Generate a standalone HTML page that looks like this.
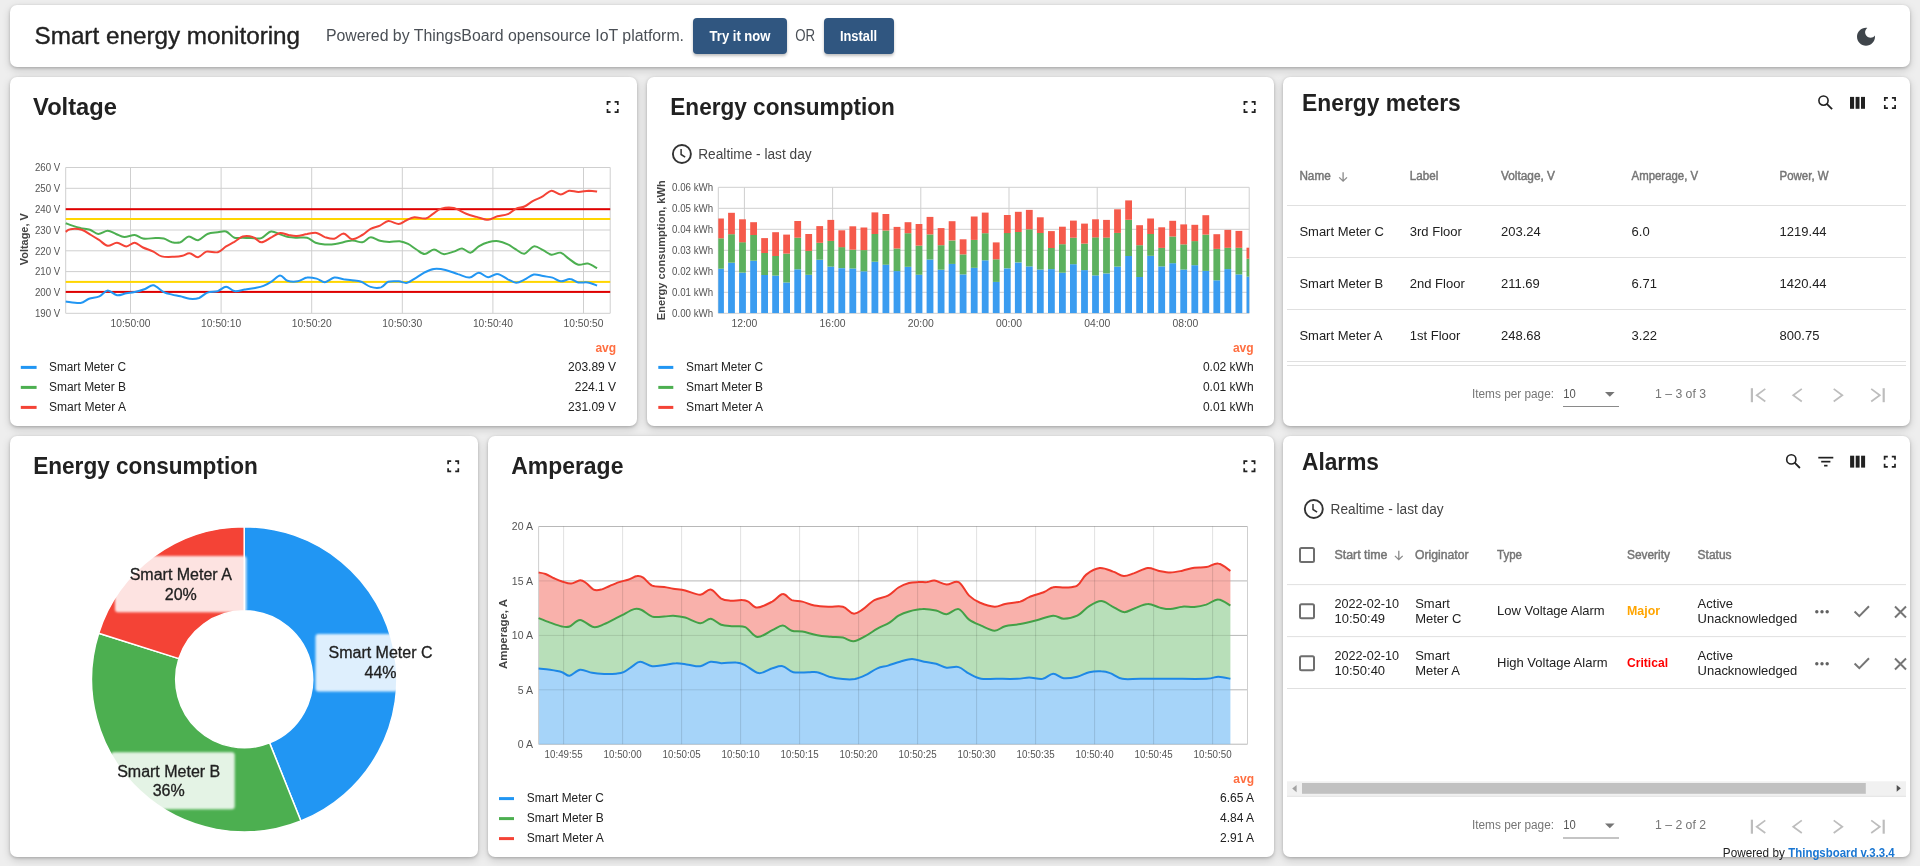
<!DOCTYPE html>
<html><head><meta charset="utf-8"><title>Smart energy monitoring</title>
<style>
html,body{margin:0;padding:0;width:1920px;height:866px;overflow:hidden;background:#eeeeee;font-family:"Liberation Sans",sans-serif}
.card{position:absolute;background:#fff;border-radius:7px;box-shadow:0 3px 8px rgba(0,0,0,.17),0 1px 3px rgba(0,0,0,.2)}
.btn{position:absolute;background:#305680;border-radius:4px;box-shadow:0 2px 3px rgba(0,0,0,.25)}
svg{position:absolute;left:0;top:0;will-change:transform}
</style></head><body>
<div class="card" style="left:10px;top:5px;width:1900px;height:62px"></div>
<div class="card" style="left:10px;top:77px;width:627px;height:349px"></div>
<div class="card" style="left:647px;top:77px;width:627px;height:349px"></div>
<div class="card" style="left:1283px;top:77px;width:627px;height:349px"></div>
<div class="card" style="left:10px;top:436px;width:468px;height:421px"></div>
<div class="card" style="left:488px;top:436px;width:786px;height:421px"></div>
<div class="card" style="left:1283px;top:436px;width:627px;height:421px"></div>
<div class="btn" style="left:693px;top:18px;width:94px;height:36px"></div>
<div class="btn" style="left:824px;top:18px;width:70px;height:36px"></div>
<svg width="1920" height="866" viewBox="0 0 1920 866" font-family="Liberation Sans, sans-serif">
<defs><filter id="soft" x="-10%" y="-10%" width="120%" height="120%"><feGaussianBlur stdDeviation="1.2"/></filter></defs>
<text x="34.5" y="44.1" font-size="23" font-weight="normal" fill="#212121" text-anchor="start" textLength="265.6" lengthAdjust="spacingAndGlyphs" stroke="#212121" stroke-width="0.35">Smart energy monitoring</text>
<text x="325.9" y="40.8" font-size="16" font-weight="normal" fill="#4a4f55" text-anchor="start" textLength="358.1" lengthAdjust="spacingAndGlyphs">Powered by ThingsBoard opensource IoT platform.</text>
<text x="740" y="41.1" font-size="14" font-weight="bold" fill="#fff" text-anchor="middle" textLength="60.8" lengthAdjust="spacingAndGlyphs">Try it now</text>
<text x="795.2" y="41.1" font-size="16" font-weight="normal" fill="#4a4f55" text-anchor="start" textLength="19.9" lengthAdjust="spacingAndGlyphs">OR</text>
<text x="858.5" y="41.1" font-size="14" font-weight="bold" fill="#fff" text-anchor="middle" textLength="37.2" lengthAdjust="spacingAndGlyphs">Install</text>
<path transform="translate(1854,24.8)" fill="#3f454b" d="M12 3c-4.97 0-9 4.03-9 9s4.03 9 9 9 9-4.03 9-9c0-.46-.04-.92-.1-1.36-.98 1.37-2.58 2.26-4.4 2.26-2.98 0-5.4-2.42-5.4-5.4 0-1.81.89-3.42 2.26-4.4-.44-.06-.9-.1-1.36-.1z"/>
<text x="33.1" y="114.9" font-size="24" font-weight="bold" fill="#212121" text-anchor="start" textLength="83.8" lengthAdjust="spacingAndGlyphs">Voltage</text>
<path d="M607.5,105 V101.8 H610.6 M614.6,101.8 H617.8 V105 M617.8,109 V112.2 H614.6 M610.6,112.2 H607.5 V109" fill="none" stroke="#212121" stroke-width="1.7" stroke-linecap="butt" stroke-linejoin="miter"/>
<rect x="65.7" y="167" width="544.5" height="1" fill="#cfcfcf"/>
<text x="60.3" y="171.2" font-size="10.5" font-weight="normal" fill="#545454" text-anchor="end" textLength="25.4" lengthAdjust="spacingAndGlyphs">260 V</text>
<rect x="65.7" y="187.8" width="544.5" height="1" fill="#cfcfcf"/>
<text x="60.3" y="192" font-size="10.5" font-weight="normal" fill="#545454" text-anchor="end" textLength="25.4" lengthAdjust="spacingAndGlyphs">250 V</text>
<rect x="65.7" y="208.7" width="544.5" height="1" fill="#cfcfcf"/>
<text x="60.3" y="212.9" font-size="10.5" font-weight="normal" fill="#545454" text-anchor="end" textLength="25.4" lengthAdjust="spacingAndGlyphs">240 V</text>
<rect x="65.7" y="229.5" width="544.5" height="1" fill="#cfcfcf"/>
<text x="60.3" y="233.7" font-size="10.5" font-weight="normal" fill="#545454" text-anchor="end" textLength="25.4" lengthAdjust="spacingAndGlyphs">230 V</text>
<rect x="65.7" y="250.3" width="544.5" height="1" fill="#cfcfcf"/>
<text x="60.3" y="254.5" font-size="10.5" font-weight="normal" fill="#545454" text-anchor="end" textLength="25.4" lengthAdjust="spacingAndGlyphs">220 V</text>
<rect x="65.7" y="271.1" width="544.5" height="1" fill="#cfcfcf"/>
<text x="60.3" y="275.3" font-size="10.5" font-weight="normal" fill="#545454" text-anchor="end" textLength="25.4" lengthAdjust="spacingAndGlyphs">210 V</text>
<rect x="65.7" y="292" width="544.5" height="1" fill="#cfcfcf"/>
<text x="60.3" y="296.2" font-size="10.5" font-weight="normal" fill="#545454" text-anchor="end" textLength="25.4" lengthAdjust="spacingAndGlyphs">200 V</text>
<rect x="65.7" y="312.8" width="544.5" height="1" fill="#cfcfcf"/>
<text x="60.3" y="317" font-size="10.5" font-weight="normal" fill="#545454" text-anchor="end" textLength="25.4" lengthAdjust="spacingAndGlyphs">190 V</text>
<rect x="130" y="167.5" width="1" height="145.8" fill="#cfcfcf"/>
<text x="130.5" y="327" font-size="10.5" font-weight="normal" fill="#545454" text-anchor="middle" textLength="40" lengthAdjust="spacingAndGlyphs">10:50:00</text>
<rect x="220.6" y="167.5" width="1" height="145.8" fill="#cfcfcf"/>
<text x="221.1" y="327" font-size="10.5" font-weight="normal" fill="#545454" text-anchor="middle" textLength="40" lengthAdjust="spacingAndGlyphs">10:50:10</text>
<rect x="311.2" y="167.5" width="1" height="145.8" fill="#cfcfcf"/>
<text x="311.7" y="327" font-size="10.5" font-weight="normal" fill="#545454" text-anchor="middle" textLength="40" lengthAdjust="spacingAndGlyphs">10:50:20</text>
<rect x="401.8" y="167.5" width="1" height="145.8" fill="#cfcfcf"/>
<text x="402.3" y="327" font-size="10.5" font-weight="normal" fill="#545454" text-anchor="middle" textLength="40" lengthAdjust="spacingAndGlyphs">10:50:30</text>
<rect x="492.4" y="167.5" width="1" height="145.8" fill="#cfcfcf"/>
<text x="492.9" y="327" font-size="10.5" font-weight="normal" fill="#545454" text-anchor="middle" textLength="40" lengthAdjust="spacingAndGlyphs">10:50:40</text>
<rect x="583" y="167.5" width="1" height="145.8" fill="#cfcfcf"/>
<text x="583.5" y="327" font-size="10.5" font-weight="normal" fill="#545454" text-anchor="middle" textLength="40" lengthAdjust="spacingAndGlyphs">10:50:50</text>
<rect x="65.2" y="167.5" width="1" height="145.8" fill="#cfcfcf"/>
<rect x="609.7" y="167.5" width="1" height="145.8" fill="#cfcfcf"/>
<rect x="65.7" y="208.2" width="544.5" height="2" fill="#e00000"/>
<rect x="65.7" y="290.9" width="544.5" height="2" fill="#e00000"/>
<rect x="65.7" y="218" width="544.5" height="2" fill="#ffd600"/>
<rect x="65.7" y="280.9" width="544.5" height="2" fill="#ffd600"/>
<path d="M65.7,223.2 C66.8,223.6 69.8,224.8 72.3,225.6 C74.8,226.5 77.7,227.5 80.6,228.1 C83.6,228.8 87.1,228.8 90,229.8 C92.9,230.8 95.4,233.8 98.3,234 C101.3,234.1 104.7,230.8 107.7,230.8 C110.6,230.8 113.2,232.9 116,234 C118.7,235 121.2,236.9 124.3,237.1 C127.4,237.3 131.6,234.8 134.7,235 C137.8,235.2 139.5,238 143,238.5 C146.5,239.1 152,238.1 155.5,238.1 C158.9,238.1 161,237.8 163.8,238.5 C166.5,239.2 169.3,241.6 172.1,242.3 C174.8,242.9 177.6,243.2 180.4,242.3 C183.2,241.3 185.8,236.8 188.7,236.5 C191.6,236.1 194.9,240.6 198.1,240.2 C201.2,239.8 204.1,235.3 207.4,234 C210.7,232.6 214.7,232.7 217.8,232.3 C220.9,231.9 223.3,230.6 226.1,231.5 C228.9,232.4 231.6,236.7 234.4,237.7 C237.2,238.7 240,237.6 242.7,237.7 C245.5,237.8 247.9,238 251,238.1 C254.2,238.2 258.1,239.2 261.4,238.1 C264.7,237 267.7,232.1 270.8,231.5 C273.9,230.8 277.2,233.4 280.1,234.4 C283.1,235.3 285.7,236.5 288.4,237.1 C291.2,237.6 293.6,237.6 296.8,237.7 C299.9,237.8 304,236.9 307.1,237.7 C310.3,238.5 312.6,241.6 315.6,242.7 C318.5,243.8 321.6,244.1 324.9,244.4 C328.2,244.6 330.8,244.6 335.3,243.9 C339.8,243.3 347.4,240.9 351.9,240.6 C356.5,240.3 359.2,242.8 362.3,242.3 C365.5,241.7 367.7,237.5 370.6,237.3 C373.6,237 376.9,240.1 380,240.8 C383.1,241.6 386.1,241.8 389.4,241.9 C392.6,241.9 396.6,240.9 399.7,241.2 C402.9,241.6 405.3,242.5 408.1,243.9 C410.8,245.3 413.6,247.8 416.4,249.5 C419.1,251.2 421.7,254.1 424.7,254.1 C427.6,254.1 430.9,249.5 434,249.5 C437.1,249.5 440.1,253.8 443.4,254.1 C446.7,254.5 450.6,252.6 453.8,251.6 C456.9,250.7 459.3,248.3 462.1,248.5 C464.8,248.7 467.6,253 470.4,252.7 C473.2,252.3 475.8,248.2 478.7,246.4 C481.6,244.7 484.8,243.1 488.1,242.3 C491.3,241.4 495.2,240.9 498.4,241.2 C501.7,241.6 504.8,243 507.8,244.4 C510.7,245.7 513.3,248 516.1,249.5 C518.9,251.1 521.5,254.2 524.4,253.7 C527.4,253.2 530.6,247 533.8,246.4 C536.9,245.8 540.2,248.8 543.1,250.2 C546.1,251.6 548.5,254.3 551.4,254.7 C554.4,255.2 557.8,252 560.8,252.7 C563.7,253.4 566.1,256.9 569.1,258.9 C572,260.9 575.3,264 578.4,264.7 C581.6,265.5 584.7,262.9 587.8,263.5 C590.9,264.1 595.6,267.5 597.1,268.2" fill="none" stroke="#4caf50" stroke-width="2" stroke-linejoin="round"/>
<path d="M65.7,231.9 C66.5,231.4 67.6,229.5 70.3,229.2 C72.9,228.8 78.2,228.8 81.7,229.8 C85.2,230.8 88.1,233.3 91,235 C94,236.7 96.6,238.4 99.4,240.2 C102.1,242 104.7,245.4 107.7,245.8 C110.6,246.2 113.9,242.6 117,242.7 C120.1,242.8 123.4,246.4 126.4,246.4 C129.3,246.4 131.9,242.5 134.7,242.7 C137.4,242.9 139.9,246 143,247.5 C146.1,249 150.3,250.1 153.4,251.6 C156.5,253.1 158.2,255.5 161.7,256.4 C165.2,257.3 170.7,256.9 174.2,256.8 C177.6,256.7 179.9,256.4 182.5,255.8 C185.1,255.2 187.1,253 189.7,253.3 C192.3,253.5 195.3,257.5 198.1,257.2 C200.8,257 203.1,252.5 206.4,251.6 C209.7,250.8 214.5,253.1 217.8,252.2 C221.1,251.4 223.3,248.2 226.1,246.4 C228.9,244.7 231.6,243.5 234.4,241.9 C237.2,240.2 239.6,237.3 242.7,236.5 C245.8,235.7 250,236.1 253.1,237.1 C256.2,238 258.3,242.3 261.4,242.3 C264.5,242.3 268.7,238.6 271.8,237.1 C274.9,235.5 277.4,233.3 280.1,232.9 C282.9,232.6 285.7,234.5 288.4,235 C291.2,235.5 293.6,236.2 296.8,236 C299.9,235.9 303.8,234.5 307.1,234 C310.5,233.4 313.7,232.4 316.6,232.9 C319.6,233.4 322,236.1 324.9,237.1 C327.9,238 331.2,239.3 334.3,238.7 C337.4,238.2 340.7,233.5 343.6,233.5 C346.6,233.6 348.8,238.9 351.9,239.2 C355.1,239.4 359.2,236.7 362.3,235 C365.5,233.3 367.7,230.3 370.6,228.8 C373.6,227.2 377.1,226.9 380,225.6 C382.9,224.4 385.2,221.4 388.3,221.1 C391.4,220.8 395.8,224.1 398.7,224 C401.6,223.9 403.4,221.6 406,220.5 C408.6,219.3 411,217.7 414.3,217.3 C417.6,217 422.6,219 425.7,218.4 C428.8,217.8 430.4,215.4 433,213.8 C435.6,212.2 437.8,209.6 441.3,208.6 C444.8,207.6 449.6,207.1 453.8,208 C457.9,208.9 462.4,212.3 466.2,213.8 C470,215.3 473,215.9 476.6,216.9 C480.3,217.9 484.6,219.9 488.1,219.8 C491.5,219.7 494.1,217.2 497.4,216.3 C500.7,215.4 504.7,215.5 507.8,214.2 C510.9,212.9 513.3,209.9 516.1,208.6 C518.9,207.3 521.6,207.8 524.4,206.5 C527.2,205.3 529.6,202.9 532.7,201.1 C535.8,199.4 540,197.9 543.1,196.1 C546.2,194.4 548.5,191 551.4,190.7 C554.4,190.5 557.8,194.5 560.8,194.5 C563.7,194.5 566.1,191.2 569.1,190.7 C572,190.3 575.2,192 578.4,192 C581.7,192 585.7,190.8 588.8,190.7 C591.9,190.7 595.8,191.4 597.1,191.6" fill="none" stroke="#f44336" stroke-width="2" stroke-linejoin="round"/>
<path d="M65.7,301.5 C68.2,301.7 76.8,303.4 80.6,302.9 C84.5,302.5 85.8,299.9 89,298.8 C92.1,297.7 96.2,297.7 99.4,296.3 C102.5,294.9 104.7,290.7 107.7,290.5 C110.6,290.3 113.9,294.8 117,295.3 C120.1,295.7 123.4,293.7 126.4,293.2 C129.3,292.7 131.6,292.8 134.7,292.1 C137.8,291.5 141.9,290.2 145.1,289 C148.2,287.9 150.3,284.8 153.4,285.3 C156.5,285.8 160.6,290.6 163.8,292.1 C166.9,293.7 169.3,293.9 172.1,294.6 C174.8,295.3 177.4,295.6 180.4,296.3 C183.3,297 186.6,298.5 189.7,298.8 C192.9,299.1 196.1,299 199.1,298 C202,296.9 204.3,293.7 207.4,292.6 C210.5,291.4 214.7,292.1 217.8,291.1 C220.9,290.1 223.3,286.7 226.1,286.7 C228.9,286.7 231.3,290.6 234.4,291.1 C237.5,291.6 241.3,290.2 244.8,289.6 C248.3,289.1 252.1,288.6 255.2,288 C258.3,287.4 260.7,287 263.5,285.9 C266.3,284.8 269,283.1 271.8,281.3 C274.6,279.6 277.5,275.6 280.1,275.5 C282.7,275.4 284.5,279.7 287.4,280.7 C290.3,281.7 294.5,281.9 297.8,281.3 C301.1,280.8 304,278 307.1,277.6 C310.3,277.1 313.7,277.9 316.6,278.6 C319.6,279.4 322,282.3 324.9,282.2 C327.9,282 331.2,278.1 334.3,277.6 C337.4,277.1 340.7,278.8 343.6,279.3 C346.6,279.7 349,279.9 351.9,280.3 C354.9,280.7 358.2,280.6 361.3,281.8 C364.4,282.9 367.4,286 370.6,286.9 C373.9,287.9 378.1,288.2 381,287.4 C384,286.5 385.4,282.8 388.3,281.8 C391.3,280.7 395.6,281.2 398.7,281.3 C401.8,281.5 404.1,283.4 407,282.8 C410,282.2 413.4,279.3 416.4,277.6 C419.3,275.9 421.7,273.9 424.7,272.4 C427.6,270.9 430.6,269.3 434,268.9 C437.5,268.5 441.5,269 445.5,269.9 C449.4,270.8 453.9,272.8 457.9,274.1 C461.9,275.3 465.9,277.8 469.4,277.6 C472.8,277.4 475.6,272.9 478.7,272.8 C481.8,272.7 484.9,277 488.1,277.2 C491.2,277.4 494.1,273.5 497.4,273.9 C500.7,274.2 504.7,277.8 507.8,279.3 C510.9,280.7 513.3,282.7 516.1,282.8 C518.9,282.9 521.5,281.1 524.4,279.7 C527.4,278.3 530.6,275.1 533.8,274.5 C536.9,273.9 540,275.6 543.1,276.1 C546.2,276.7 549.5,276.7 552.5,277.6 C555.4,278.5 557.8,281.1 560.8,281.3 C563.7,281.6 567.2,278.9 570.1,279.1 C573.1,279.2 575.5,281.8 578.4,282.4 C581.4,282.9 584.7,281.9 587.8,282.4 C590.9,282.9 595.6,285 597.1,285.5" fill="none" stroke="#2196f3" stroke-width="2" stroke-linejoin="round"/>
<text transform="translate(28.4,239.2) rotate(-90)" x="0" y="0" font-size="11.5" font-weight="bold" fill="#444" text-anchor="middle" textLength="52" lengthAdjust="spacingAndGlyphs">Voltage, V</text>
<text x="616.1" y="351.6" font-size="12" font-weight="bold" fill="#ff6e40" text-anchor="end">avg</text>
<rect x="20.8" y="365.9" width="15.8" height="3" fill="#2196f3"/>
<text x="49" y="370.9" font-size="12" font-weight="normal" fill="#212121" text-anchor="start" textLength="77" lengthAdjust="spacingAndGlyphs">Smart Meter C</text>
<text x="616.1" y="370.9" font-size="12" font-weight="normal" fill="#212121" text-anchor="end">203.89 V</text>
<rect x="20.8" y="385.9" width="15.8" height="3" fill="#4caf50"/>
<text x="49" y="390.9" font-size="12" font-weight="normal" fill="#212121" text-anchor="start" textLength="77" lengthAdjust="spacingAndGlyphs">Smart Meter B</text>
<text x="616.1" y="390.9" font-size="12" font-weight="normal" fill="#212121" text-anchor="end">224.1 V</text>
<rect x="20.8" y="405.9" width="15.8" height="3" fill="#f44336"/>
<text x="49" y="410.9" font-size="12" font-weight="normal" fill="#212121" text-anchor="start" textLength="77" lengthAdjust="spacingAndGlyphs">Smart Meter A</text>
<text x="616.1" y="410.9" font-size="12" font-weight="normal" fill="#212121" text-anchor="end">231.09 V</text>
<text x="670.3" y="114.9" font-size="24" font-weight="bold" fill="#212121" text-anchor="start" textLength="224.5" lengthAdjust="spacingAndGlyphs">Energy consumption</text>
<path d="M1244.4,105 V101.8 H1247.6 M1251.6,101.8 H1254.8 V105 M1254.8,109 V112.2 H1251.6 M1247.6,112.2 H1244.4 V109" fill="none" stroke="#212121" stroke-width="1.7" stroke-linecap="butt" stroke-linejoin="miter"/>
<circle cx="681.9" cy="154" r="9.0" fill="none" stroke="#333" stroke-width="1.9"/>
<path d="M681.1,149 V154.5 L685.2,157.2" fill="none" stroke="#333" stroke-width="1.5"/>
<text x="698.2" y="159.4" font-size="14" font-weight="normal" fill="#444" text-anchor="start" textLength="113.5" lengthAdjust="spacingAndGlyphs">Realtime - last day</text>
<rect x="718.3" y="186.8" width="530.9" height="1" fill="#cfcfcf"/>
<text x="713.1" y="191" font-size="10.5" font-weight="normal" fill="#545454" text-anchor="end" textLength="41" lengthAdjust="spacingAndGlyphs">0.06 kWh</text>
<rect x="718.3" y="207.8" width="530.9" height="1" fill="#cfcfcf"/>
<text x="713.1" y="212" font-size="10.5" font-weight="normal" fill="#545454" text-anchor="end" textLength="41" lengthAdjust="spacingAndGlyphs">0.05 kWh</text>
<rect x="718.3" y="228.8" width="530.9" height="1" fill="#cfcfcf"/>
<text x="713.1" y="233" font-size="10.5" font-weight="normal" fill="#545454" text-anchor="end" textLength="41" lengthAdjust="spacingAndGlyphs">0.04 kWh</text>
<rect x="718.3" y="249.8" width="530.9" height="1" fill="#cfcfcf"/>
<text x="713.1" y="254" font-size="10.5" font-weight="normal" fill="#545454" text-anchor="end" textLength="41" lengthAdjust="spacingAndGlyphs">0.03 kWh</text>
<rect x="718.3" y="270.8" width="530.9" height="1" fill="#cfcfcf"/>
<text x="713.1" y="275" font-size="10.5" font-weight="normal" fill="#545454" text-anchor="end" textLength="41" lengthAdjust="spacingAndGlyphs">0.02 kWh</text>
<rect x="718.3" y="291.8" width="530.9" height="1" fill="#cfcfcf"/>
<text x="713.1" y="296" font-size="10.5" font-weight="normal" fill="#545454" text-anchor="end" textLength="41" lengthAdjust="spacingAndGlyphs">0.01 kWh</text>
<rect x="718.3" y="312.8" width="530.9" height="1" fill="#cfcfcf"/>
<text x="713.1" y="317" font-size="10.5" font-weight="normal" fill="#545454" text-anchor="end" textLength="41" lengthAdjust="spacingAndGlyphs">0.00 kWh</text>
<rect x="743.9" y="187.3" width="1" height="126" fill="#cfcfcf"/>
<text x="744.4" y="327" font-size="10.5" font-weight="normal" fill="#545454" text-anchor="middle" textLength="26" lengthAdjust="spacingAndGlyphs">12:00</text>
<rect x="832.1" y="187.3" width="1" height="126" fill="#cfcfcf"/>
<text x="832.6" y="327" font-size="10.5" font-weight="normal" fill="#545454" text-anchor="middle" textLength="26" lengthAdjust="spacingAndGlyphs">16:00</text>
<rect x="920.3" y="187.3" width="1" height="126" fill="#cfcfcf"/>
<text x="920.8" y="327" font-size="10.5" font-weight="normal" fill="#545454" text-anchor="middle" textLength="26" lengthAdjust="spacingAndGlyphs">20:00</text>
<rect x="1008.5" y="187.3" width="1" height="126" fill="#cfcfcf"/>
<text x="1009" y="327" font-size="10.5" font-weight="normal" fill="#545454" text-anchor="middle" textLength="26" lengthAdjust="spacingAndGlyphs">00:00</text>
<rect x="1096.7" y="187.3" width="1" height="126" fill="#cfcfcf"/>
<text x="1097.2" y="327" font-size="10.5" font-weight="normal" fill="#545454" text-anchor="middle" textLength="26" lengthAdjust="spacingAndGlyphs">04:00</text>
<rect x="1184.9" y="187.3" width="1" height="126" fill="#cfcfcf"/>
<text x="1185.4" y="327" font-size="10.5" font-weight="normal" fill="#545454" text-anchor="middle" textLength="26" lengthAdjust="spacingAndGlyphs">08:00</text>
<rect x="717.8" y="187.3" width="1" height="126" fill="#cfcfcf"/>
<rect x="1248.7" y="187.3" width="1" height="126" fill="#cfcfcf"/>
<clipPath id="ec"><rect x="718.3" y="187.3" width="530.9" height="126"/></clipPath>
<g clip-path="url(#ec)">
<rect x="717.1" y="268.7" width="6.8" height="44.6" fill="#3a9cf0"/>
<rect x="717.1" y="238.3" width="6.8" height="30.4" fill="#5db15f"/>
<rect x="717.1" y="218.5" width="6.8" height="19.8" fill="#f55a4b"/>
<rect x="728.1" y="262.7" width="6.8" height="50.6" fill="#3a9cf0"/>
<rect x="728.1" y="234.2" width="6.8" height="28.5" fill="#5db15f"/>
<rect x="728.1" y="212.8" width="6.8" height="21.4" fill="#f55a4b"/>
<rect x="739.1" y="272.7" width="6.8" height="40.6" fill="#3a9cf0"/>
<rect x="739.1" y="242.2" width="6.8" height="30.4" fill="#5db15f"/>
<rect x="739.1" y="219.3" width="6.8" height="23" fill="#f55a4b"/>
<rect x="750.2" y="260.7" width="6.8" height="52.6" fill="#3a9cf0"/>
<rect x="750.2" y="235" width="6.8" height="25.7" fill="#5db15f"/>
<rect x="750.2" y="222.2" width="6.8" height="12.8" fill="#f55a4b"/>
<rect x="761.2" y="275" width="6.8" height="38.3" fill="#3a9cf0"/>
<rect x="761.2" y="253" width="6.8" height="22" fill="#5db15f"/>
<rect x="761.2" y="238.1" width="6.8" height="14.9" fill="#f55a4b"/>
<rect x="772.2" y="275.6" width="6.8" height="37.7" fill="#3a9cf0"/>
<rect x="772.2" y="256" width="6.8" height="19.6" fill="#5db15f"/>
<rect x="772.2" y="232.2" width="6.8" height="23.8" fill="#f55a4b"/>
<rect x="783.2" y="282.5" width="6.8" height="30.8" fill="#3a9cf0"/>
<rect x="783.2" y="253.6" width="6.8" height="28.9" fill="#5db15f"/>
<rect x="783.2" y="234.6" width="6.8" height="19" fill="#f55a4b"/>
<rect x="794.3" y="269.3" width="6.8" height="44" fill="#3a9cf0"/>
<rect x="794.3" y="237.7" width="6.8" height="31.6" fill="#5db15f"/>
<rect x="794.3" y="221" width="6.8" height="16.7" fill="#f55a4b"/>
<rect x="805.3" y="274.8" width="6.8" height="38.5" fill="#3a9cf0"/>
<rect x="805.3" y="250.9" width="6.8" height="23.9" fill="#5db15f"/>
<rect x="805.3" y="234" width="6.8" height="16.9" fill="#f55a4b"/>
<rect x="816.3" y="259.7" width="6.8" height="53.6" fill="#3a9cf0"/>
<rect x="816.3" y="242.8" width="6.8" height="16.9" fill="#5db15f"/>
<rect x="816.3" y="226.1" width="6.8" height="16.7" fill="#f55a4b"/>
<rect x="827.4" y="266.6" width="6.8" height="46.7" fill="#3a9cf0"/>
<rect x="827.4" y="240.9" width="6.8" height="25.7" fill="#5db15f"/>
<rect x="827.4" y="219.9" width="6.8" height="21" fill="#f55a4b"/>
<rect x="838.4" y="268.2" width="6.8" height="45.1" fill="#3a9cf0"/>
<rect x="838.4" y="247.1" width="6.8" height="21" fill="#5db15f"/>
<rect x="838.4" y="230.3" width="6.8" height="16.9" fill="#f55a4b"/>
<rect x="849.4" y="268.5" width="6.8" height="44.8" fill="#3a9cf0"/>
<rect x="849.4" y="249.7" width="6.8" height="18.8" fill="#5db15f"/>
<rect x="849.4" y="226.3" width="6.8" height="23.4" fill="#f55a4b"/>
<rect x="860.5" y="271.3" width="6.8" height="42" fill="#3a9cf0"/>
<rect x="860.5" y="250.1" width="6.8" height="21.2" fill="#5db15f"/>
<rect x="860.5" y="227.5" width="6.8" height="22.6" fill="#f55a4b"/>
<rect x="871.5" y="261.7" width="6.8" height="51.6" fill="#3a9cf0"/>
<rect x="871.5" y="234" width="6.8" height="27.7" fill="#5db15f"/>
<rect x="871.5" y="212.4" width="6.8" height="21.6" fill="#f55a4b"/>
<rect x="882.5" y="264.6" width="6.8" height="48.7" fill="#3a9cf0"/>
<rect x="882.5" y="230.5" width="6.8" height="34.2" fill="#5db15f"/>
<rect x="882.5" y="214" width="6.8" height="16.5" fill="#f55a4b"/>
<rect x="893.6" y="271.1" width="6.8" height="42.2" fill="#3a9cf0"/>
<rect x="893.6" y="248.5" width="6.8" height="22.6" fill="#5db15f"/>
<rect x="893.6" y="226.9" width="6.8" height="21.6" fill="#f55a4b"/>
<rect x="904.6" y="266.8" width="6.8" height="46.5" fill="#3a9cf0"/>
<rect x="904.6" y="233.2" width="6.8" height="33.6" fill="#5db15f"/>
<rect x="904.6" y="222.2" width="6.8" height="11" fill="#f55a4b"/>
<rect x="915.6" y="274.6" width="6.8" height="38.7" fill="#3a9cf0"/>
<rect x="915.6" y="245.6" width="6.8" height="29.1" fill="#5db15f"/>
<rect x="915.6" y="224" width="6.8" height="21.6" fill="#f55a4b"/>
<rect x="926.6" y="259.5" width="6.8" height="53.8" fill="#3a9cf0"/>
<rect x="926.6" y="234.4" width="6.8" height="25.1" fill="#5db15f"/>
<rect x="926.6" y="216.9" width="6.8" height="17.5" fill="#f55a4b"/>
<rect x="937.7" y="269.7" width="6.8" height="43.6" fill="#3a9cf0"/>
<rect x="937.7" y="245.2" width="6.8" height="24.5" fill="#5db15f"/>
<rect x="937.7" y="228.1" width="6.8" height="17.1" fill="#f55a4b"/>
<rect x="948.7" y="263.8" width="6.8" height="49.5" fill="#3a9cf0"/>
<rect x="948.7" y="240.5" width="6.8" height="23.4" fill="#5db15f"/>
<rect x="948.7" y="221.2" width="6.8" height="19.2" fill="#f55a4b"/>
<rect x="959.7" y="274.4" width="6.8" height="38.9" fill="#3a9cf0"/>
<rect x="959.7" y="254.4" width="6.8" height="20" fill="#5db15f"/>
<rect x="959.7" y="239.3" width="6.8" height="15.1" fill="#f55a4b"/>
<rect x="970.8" y="267.8" width="6.8" height="45.5" fill="#3a9cf0"/>
<rect x="970.8" y="239.9" width="6.8" height="27.9" fill="#5db15f"/>
<rect x="970.8" y="216.5" width="6.8" height="23.4" fill="#f55a4b"/>
<rect x="981.8" y="260.3" width="6.8" height="53" fill="#3a9cf0"/>
<rect x="981.8" y="233.2" width="6.8" height="27.1" fill="#5db15f"/>
<rect x="981.8" y="212.6" width="6.8" height="20.6" fill="#f55a4b"/>
<rect x="992.8" y="281.9" width="6.8" height="31.4" fill="#3a9cf0"/>
<rect x="992.8" y="259.3" width="6.8" height="22.6" fill="#5db15f"/>
<rect x="992.8" y="242.4" width="6.8" height="16.9" fill="#f55a4b"/>
<rect x="1003.9" y="268.4" width="6.8" height="44.9" fill="#3a9cf0"/>
<rect x="1003.9" y="233" width="6.8" height="35.3" fill="#5db15f"/>
<rect x="1003.9" y="215" width="6.8" height="18.1" fill="#f55a4b"/>
<rect x="1014.9" y="262.5" width="6.8" height="50.8" fill="#3a9cf0"/>
<rect x="1014.9" y="232" width="6.8" height="30.4" fill="#5db15f"/>
<rect x="1014.9" y="211.8" width="6.8" height="20.2" fill="#f55a4b"/>
<rect x="1025.9" y="266.4" width="6.8" height="46.9" fill="#3a9cf0"/>
<rect x="1025.9" y="229.3" width="6.8" height="37.1" fill="#5db15f"/>
<rect x="1025.9" y="209.9" width="6.8" height="19.4" fill="#f55a4b"/>
<rect x="1036.9" y="269.5" width="6.8" height="43.8" fill="#3a9cf0"/>
<rect x="1036.9" y="233" width="6.8" height="36.5" fill="#5db15f"/>
<rect x="1036.9" y="217.3" width="6.8" height="15.7" fill="#f55a4b"/>
<rect x="1048" y="269.1" width="6.8" height="44.2" fill="#3a9cf0"/>
<rect x="1048" y="247.9" width="6.8" height="21.2" fill="#5db15f"/>
<rect x="1048" y="231.1" width="6.8" height="16.9" fill="#f55a4b"/>
<rect x="1059" y="272.7" width="6.8" height="40.6" fill="#3a9cf0"/>
<rect x="1059" y="244.2" width="6.8" height="28.5" fill="#5db15f"/>
<rect x="1059" y="226.7" width="6.8" height="17.5" fill="#f55a4b"/>
<rect x="1070" y="264.2" width="6.8" height="49.1" fill="#3a9cf0"/>
<rect x="1070" y="237.7" width="6.8" height="26.5" fill="#5db15f"/>
<rect x="1070" y="220.6" width="6.8" height="17.1" fill="#f55a4b"/>
<rect x="1081.1" y="270.1" width="6.8" height="43.2" fill="#3a9cf0"/>
<rect x="1081.1" y="243.6" width="6.8" height="26.5" fill="#5db15f"/>
<rect x="1081.1" y="223.6" width="6.8" height="20" fill="#f55a4b"/>
<rect x="1092.1" y="275.4" width="6.8" height="37.9" fill="#3a9cf0"/>
<rect x="1092.1" y="237.3" width="6.8" height="38.1" fill="#5db15f"/>
<rect x="1092.1" y="219.3" width="6.8" height="18.1" fill="#f55a4b"/>
<rect x="1103.1" y="273.5" width="6.8" height="39.8" fill="#3a9cf0"/>
<rect x="1103.1" y="237.5" width="6.8" height="35.9" fill="#5db15f"/>
<rect x="1103.1" y="219.9" width="6.8" height="17.7" fill="#f55a4b"/>
<rect x="1114.1" y="266.6" width="6.8" height="46.7" fill="#3a9cf0"/>
<rect x="1114.1" y="232.8" width="6.8" height="33.8" fill="#5db15f"/>
<rect x="1114.1" y="209.3" width="6.8" height="23.6" fill="#f55a4b"/>
<rect x="1125.2" y="256" width="6.8" height="57.3" fill="#3a9cf0"/>
<rect x="1125.2" y="219.9" width="6.8" height="36.1" fill="#5db15f"/>
<rect x="1125.2" y="200.4" width="6.8" height="19.4" fill="#f55a4b"/>
<rect x="1136.2" y="277" width="6.8" height="36.3" fill="#3a9cf0"/>
<rect x="1136.2" y="245.2" width="6.8" height="31.8" fill="#5db15f"/>
<rect x="1136.2" y="225.2" width="6.8" height="20" fill="#f55a4b"/>
<rect x="1147.2" y="255.8" width="6.8" height="57.5" fill="#3a9cf0"/>
<rect x="1147.2" y="234" width="6.8" height="21.8" fill="#5db15f"/>
<rect x="1147.2" y="218.5" width="6.8" height="15.5" fill="#f55a4b"/>
<rect x="1158.3" y="266.4" width="6.8" height="46.9" fill="#3a9cf0"/>
<rect x="1158.3" y="247.9" width="6.8" height="18.5" fill="#5db15f"/>
<rect x="1158.3" y="227.3" width="6.8" height="20.6" fill="#f55a4b"/>
<rect x="1169.3" y="263.2" width="6.8" height="50.1" fill="#3a9cf0"/>
<rect x="1169.3" y="236.5" width="6.8" height="26.7" fill="#5db15f"/>
<rect x="1169.3" y="220.8" width="6.8" height="15.7" fill="#f55a4b"/>
<rect x="1180.3" y="269.5" width="6.8" height="43.8" fill="#3a9cf0"/>
<rect x="1180.3" y="244.4" width="6.8" height="25.1" fill="#5db15f"/>
<rect x="1180.3" y="224.4" width="6.8" height="20" fill="#f55a4b"/>
<rect x="1191.4" y="265.2" width="6.8" height="48.1" fill="#3a9cf0"/>
<rect x="1191.4" y="241.1" width="6.8" height="24.1" fill="#5db15f"/>
<rect x="1191.4" y="224.8" width="6.8" height="16.3" fill="#f55a4b"/>
<rect x="1202.4" y="270.9" width="6.8" height="42.4" fill="#3a9cf0"/>
<rect x="1202.4" y="234.6" width="6.8" height="36.3" fill="#5db15f"/>
<rect x="1202.4" y="215.2" width="6.8" height="19.4" fill="#f55a4b"/>
<rect x="1213.4" y="280.3" width="6.8" height="33" fill="#3a9cf0"/>
<rect x="1213.4" y="248.9" width="6.8" height="31.4" fill="#5db15f"/>
<rect x="1213.4" y="234.2" width="6.8" height="14.7" fill="#f55a4b"/>
<rect x="1224.4" y="269.1" width="6.8" height="44.2" fill="#3a9cf0"/>
<rect x="1224.4" y="247.7" width="6.8" height="21.4" fill="#5db15f"/>
<rect x="1224.4" y="229.9" width="6.8" height="17.9" fill="#f55a4b"/>
<rect x="1235.5" y="274.4" width="6.8" height="38.9" fill="#3a9cf0"/>
<rect x="1235.5" y="247.7" width="6.8" height="26.7" fill="#5db15f"/>
<rect x="1235.5" y="230.9" width="6.8" height="16.9" fill="#f55a4b"/>
<rect x="1246.5" y="276.6" width="6.8" height="36.7" fill="#3a9cf0"/>
<rect x="1246.5" y="258.7" width="6.8" height="17.9" fill="#5db15f"/>
<rect x="1246.5" y="247.7" width="6.8" height="11" fill="#f55a4b"/>
</g>
<text transform="translate(665.4,250.2) rotate(-90)" x="0" y="0" font-size="11.5" font-weight="bold" fill="#444" text-anchor="middle" textLength="140" lengthAdjust="spacingAndGlyphs">Energy consumption, kWh</text>
<text x="1253.6" y="351.6" font-size="12" font-weight="bold" fill="#ff6e40" text-anchor="end">avg</text>
<rect x="658.3" y="365.9" width="15" height="3" fill="#2196f3"/>
<text x="686.1" y="370.9" font-size="12" font-weight="normal" fill="#212121" text-anchor="start" textLength="77" lengthAdjust="spacingAndGlyphs">Smart Meter C</text>
<text x="1253.6" y="370.9" font-size="12" font-weight="normal" fill="#212121" text-anchor="end">0.02 kWh</text>
<rect x="658.3" y="385.9" width="15" height="3" fill="#4caf50"/>
<text x="686.1" y="390.9" font-size="12" font-weight="normal" fill="#212121" text-anchor="start" textLength="77" lengthAdjust="spacingAndGlyphs">Smart Meter B</text>
<text x="1253.6" y="390.9" font-size="12" font-weight="normal" fill="#212121" text-anchor="end">0.01 kWh</text>
<rect x="658.3" y="405.9" width="15" height="3" fill="#f44336"/>
<text x="686.1" y="410.9" font-size="12" font-weight="normal" fill="#212121" text-anchor="start" textLength="77" lengthAdjust="spacingAndGlyphs">Smart Meter A</text>
<text x="1253.6" y="410.9" font-size="12" font-weight="normal" fill="#212121" text-anchor="end">0.01 kWh</text>
<text x="1302" y="110.7" font-size="24" font-weight="bold" fill="#212121" text-anchor="start" textLength="158.8" lengthAdjust="spacingAndGlyphs">Energy meters</text>
<circle cx="1823.5" cy="100.6" r="4.6" fill="none" stroke="#212121" stroke-width="1.6"/>
<path d="M1826.8,103.9 L1832.1,109.2" stroke="#212121" stroke-width="1.8"/>
<rect x="1850" y="96.9" width="4.1" height="11.9" fill="#212121"/>
<rect x="1855.6" y="96.9" width="3.9" height="11.9" fill="#212121"/>
<rect x="1861" y="96.9" width="4" height="11.9" fill="#212121"/>
<path d="M1884.8,100.9 V97.8 H1887.9 M1891.9,97.8 H1895.1 V100.9 M1895.1,104.9 V108.1 H1891.9 M1887.9,108.1 H1884.8 V104.9" fill="none" stroke="#212121" stroke-width="1.7" stroke-linecap="butt" stroke-linejoin="miter"/>
<text x="1299.4" y="180.2" font-size="12" font-weight="normal" fill="#757575" text-anchor="start" textLength="31.3" lengthAdjust="spacingAndGlyphs" stroke="#757575" stroke-width="0.45">Name</text>
<text x="1409.8" y="180.2" font-size="12" font-weight="normal" fill="#757575" text-anchor="start" textLength="28.5" lengthAdjust="spacingAndGlyphs" stroke="#757575" stroke-width="0.45">Label</text>
<text x="1501" y="180.2" font-size="12" font-weight="normal" fill="#757575" text-anchor="start" textLength="54" lengthAdjust="spacingAndGlyphs" stroke="#757575" stroke-width="0.45">Voltage, V</text>
<text x="1631.6" y="180.2" font-size="12" font-weight="normal" fill="#757575" text-anchor="start" textLength="66.5" lengthAdjust="spacingAndGlyphs" stroke="#757575" stroke-width="0.45">Amperage, V</text>
<text x="1779.6" y="180.2" font-size="12" font-weight="normal" fill="#757575" text-anchor="start" textLength="49" lengthAdjust="spacingAndGlyphs" stroke="#757575" stroke-width="0.45">Power, W</text>
<path d="M1343.1,172.3 V181 M1339.2,177.4 L1343.1,181.2 L1347,177.4" fill="none" stroke="#8a8a8a" stroke-width="1.3"/>
<rect x="1287" y="205" width="619" height="1" fill="#e0e0e0"/>
<rect x="1287" y="257" width="619" height="1" fill="#e0e0e0"/>
<rect x="1287" y="309" width="619" height="1" fill="#e0e0e0"/>
<rect x="1287" y="361" width="619" height="1" fill="#e0e0e0"/>
<rect x="1287" y="365" width="619" height="1" fill="#e0e0e0"/>
<text x="1299.4" y="235.9" font-size="13" font-weight="normal" fill="#212121" text-anchor="start">Smart Meter C</text>
<text x="1409.8" y="235.9" font-size="13" font-weight="normal" fill="#212121" text-anchor="start">3rd Floor</text>
<text x="1501" y="235.9" font-size="13" font-weight="normal" fill="#212121" text-anchor="start">203.24</text>
<text x="1631.6" y="235.9" font-size="13" font-weight="normal" fill="#212121" text-anchor="start">6.0</text>
<text x="1779.6" y="235.9" font-size="13" font-weight="normal" fill="#212121" text-anchor="start">1219.44</text>
<text x="1299.4" y="287.9" font-size="13" font-weight="normal" fill="#212121" text-anchor="start">Smart Meter B</text>
<text x="1409.8" y="287.9" font-size="13" font-weight="normal" fill="#212121" text-anchor="start">2nd Floor</text>
<text x="1501" y="287.9" font-size="13" font-weight="normal" fill="#212121" text-anchor="start">211.69</text>
<text x="1631.6" y="287.9" font-size="13" font-weight="normal" fill="#212121" text-anchor="start">6.71</text>
<text x="1779.6" y="287.9" font-size="13" font-weight="normal" fill="#212121" text-anchor="start">1420.44</text>
<text x="1299.4" y="339.9" font-size="13" font-weight="normal" fill="#212121" text-anchor="start">Smart Meter A</text>
<text x="1409.8" y="339.9" font-size="13" font-weight="normal" fill="#212121" text-anchor="start">1st Floor</text>
<text x="1501" y="339.9" font-size="13" font-weight="normal" fill="#212121" text-anchor="start">248.68</text>
<text x="1631.6" y="339.9" font-size="13" font-weight="normal" fill="#212121" text-anchor="start">3.22</text>
<text x="1779.6" y="339.9" font-size="13" font-weight="normal" fill="#212121" text-anchor="start">800.75</text>
<text x="1472" y="397.7" font-size="12" font-weight="normal" fill="#757575" text-anchor="start" textLength="82" lengthAdjust="spacingAndGlyphs">Items per page:</text>
<text x="1563.3" y="397.7" font-size="12" font-weight="normal" fill="#555" text-anchor="start" textLength="12.5" lengthAdjust="spacingAndGlyphs">10</text>
<path d="M1605,392 h9.6 l-4.8,4.8z" fill="#757575"/>
<rect x="1563" y="406" width="56" height="1" fill="#8a8a8a"/>
<text x="1655" y="397.7" font-size="12" font-weight="normal" fill="#757575" text-anchor="start" textLength="51" lengthAdjust="spacingAndGlyphs">1 – 3 of 3</text>
<rect x="1750.8" y="388.2" width="2.2" height="14" fill="#bdbdbd"/>
<path d="M1765.3,388.9 L1756.7,395.2 L1765.3,401.5" fill="none" stroke="#bdbdbd" stroke-width="1.75"/>
<path d="M1801.8,388.9 L1793.2,395.2 L1801.8,401.5" fill="none" stroke="#bdbdbd" stroke-width="1.75"/>
<path d="M1833.7,388.9 L1842.3,395.2 L1833.7,401.5" fill="none" stroke="#bdbdbd" stroke-width="1.75"/>
<path d="M1871.2,388.9 L1879.8,395.2 L1871.2,401.5" fill="none" stroke="#bdbdbd" stroke-width="1.75"/>
<rect x="1882.6" y="388.2" width="2.2" height="14" fill="#bdbdbd"/>
<text x="33.2" y="474.3" font-size="24" font-weight="bold" fill="#212121" text-anchor="start" textLength="224.6" lengthAdjust="spacingAndGlyphs">Energy consumption</text>
<path d="M448.1,464.3 V461.2 H451.2 M455.2,461.2 H458.3 V464.3 M458.3,468.3 V471.4 H455.2 M451.2,471.4 H448.1 V468.3" fill="none" stroke="#212121" stroke-width="1.7" stroke-linecap="butt" stroke-linejoin="miter"/>
<path d="M244.2,526.7 A152.6,152.6 0 0 1 300.9,821 L269.6,742.9 A68.5,68.5 0 0 0 244.2,610.8 Z" fill="#2196f3" stroke="#fff" stroke-width="1.5" stroke-linejoin="round"/>
<path d="M300.9,821 A152.6,152.6 0 0 1 98.7,633.2 L178.9,658.6 A68.5,68.5 0 0 0 269.6,742.9 Z" fill="#4caf50" stroke="#fff" stroke-width="1.5" stroke-linejoin="round"/>
<path d="M98.7,633.2 A152.6,152.6 0 0 1 244.2,526.7 L244.2,610.8 A68.5,68.5 0 0 0 178.9,658.6 Z" fill="#f44336" stroke="#fff" stroke-width="1.5" stroke-linejoin="round"/>
<rect x="115" y="556" width="131.5" height="56.3" rx="3" fill="rgba(255,255,255,0.85)" filter="url(#soft)"/>
<text x="180.8" y="580.3" font-size="16" font-weight="normal" fill="#212121" text-anchor="middle" stroke="#212121" stroke-width="0.3">Smart Meter A</text>
<text x="180.8" y="599.5" font-size="16" font-weight="normal" fill="#212121" text-anchor="middle" stroke="#212121" stroke-width="0.3">20%</text>
<rect x="315.5" y="634" width="82.5" height="57.4" rx="3" fill="rgba(255,255,255,0.85)" filter="url(#soft)"/>
<text x="380.5" y="658.3" font-size="16" font-weight="normal" fill="#212121" text-anchor="middle" stroke="#212121" stroke-width="0.3">Smart Meter C</text>
<text x="380.5" y="677.5" font-size="16" font-weight="normal" fill="#212121" text-anchor="middle" stroke="#212121" stroke-width="0.3">44%</text>
<rect x="111" y="752.3" width="123.7" height="56.9" rx="3" fill="rgba(255,255,255,0.85)" filter="url(#soft)"/>
<text x="168.7" y="776.6" font-size="16" font-weight="normal" fill="#212121" text-anchor="middle" stroke="#212121" stroke-width="0.3">Smart Meter B</text>
<text x="168.7" y="795.8" font-size="16" font-weight="normal" fill="#212121" text-anchor="middle" stroke="#212121" stroke-width="0.3">36%</text>
<text x="511.2" y="474.3" font-size="24" font-weight="bold" fill="#212121" text-anchor="start" textLength="112.2" lengthAdjust="spacingAndGlyphs">Amperage</text>
<path d="M1244.2,464.3 V461.2 H1247.4 M1251.4,461.2 H1254.6 V464.3 M1254.6,468.3 V471.4 H1251.4 M1247.4,471.4 H1244.2 V468.3" fill="none" stroke="#212121" stroke-width="1.7" stroke-linecap="butt" stroke-linejoin="miter"/>
<rect x="538.6" y="526" width="708.9" height="1" fill="#cfcfcf"/>
<text x="532.9" y="530.2" font-size="10.5" font-weight="normal" fill="#545454" text-anchor="end">20 A</text>
<rect x="538.6" y="580.4" width="708.9" height="1" fill="#cfcfcf"/>
<text x="532.9" y="584.6" font-size="10.5" font-weight="normal" fill="#545454" text-anchor="end">15 A</text>
<rect x="538.6" y="634.9" width="708.9" height="1" fill="#cfcfcf"/>
<text x="532.9" y="639.1" font-size="10.5" font-weight="normal" fill="#545454" text-anchor="end">10 A</text>
<rect x="538.6" y="689.3" width="708.9" height="1" fill="#cfcfcf"/>
<text x="532.9" y="693.5" font-size="10.5" font-weight="normal" fill="#545454" text-anchor="end">5 A</text>
<rect x="538.6" y="743.7" width="708.9" height="1" fill="#cfcfcf"/>
<text x="532.9" y="747.9" font-size="10.5" font-weight="normal" fill="#545454" text-anchor="end">0 A</text>
<path d="M538.6,572.5 C539.8,572.7 542.9,573 545.6,574 C548.2,575 551.8,577.2 554.6,578.5 C557.3,579.7 559.3,580.6 562.1,581.5 C564.8,582.3 568.1,583.8 571.1,583.6 C574.1,583.4 577.6,580.4 580.1,580.3 C582.6,580.2 583.8,581.4 586.1,583 C588.3,584.5 591.1,588.5 593.6,589.6 C596.1,590.7 598.4,590.2 601.1,589.6 C603.9,588.9 607.1,586.9 610.1,585.7 C613.1,584.4 616.1,583.1 619.1,582.1 C622.1,581.1 625.1,580.7 628.1,579.7 C631.1,578.7 634.6,576.4 637.1,576.1 C639.6,575.7 640.7,576 643.2,577.6 C645.7,579.2 648.7,584.1 652.2,585.7 C655.7,587.2 660.7,586.4 664.2,586.9 C667.7,587.4 669.7,588.1 673.2,588.7 C676.7,589.3 680.7,589.5 685.2,590.5 C689.7,591.5 696,594.8 700.2,594.7 C704.5,594.5 707.2,588.9 710.7,589.6 C714.2,590.2 718,596.7 721.2,598.6 C724.5,600.4 726.7,600.4 730.2,600.7 C733.7,600.9 739.2,599.9 742.3,600.1 C745.3,600.2 745.8,600.3 748.3,601.6 C750.8,602.8 753.3,607.6 757.3,607.6 C761.3,607.6 768,603.8 772.3,601.6 C776.5,599.3 779.5,594.3 782.8,594.1 C786,593.8 788.5,598.8 791.8,600.1 C795.1,601.3 798.6,600.7 802.3,601.6 C806.1,602.5 809.8,604.6 814.3,605.5 C818.8,606.3 824.6,606.5 829.3,606.7 C834.1,606.9 838.8,605.5 842.9,606.7 C846.9,607.8 850.1,613.1 853.4,613.6 C856.6,614.1 858.9,612 862.4,609.7 C865.9,607.4 870.1,602.4 874.4,600.1 C878.7,597.7 884,597.7 888,595.6 C892,593.5 895,589.6 898.5,587.5 C902,585.4 905.8,583.9 909,583 C912.3,582.1 915,582.2 918,582.1 C921.1,581.9 924.3,582.3 927.1,582.1 C929.8,581.8 931.3,580.2 934.6,580.6 C937.8,581 942.6,584.2 946.6,584.5 C950.6,584.7 954.8,580.2 958.6,582.1 C962.3,583.9 965.6,592.2 969.1,595.6 C972.6,599 975.4,600.6 979.6,602.5 C983.9,604.3 990.4,606.4 994.6,606.7 C998.9,606.9 1000.9,604.8 1005.1,604 C1009.4,603.1 1016.1,602.7 1020.2,601.6 C1024.2,600.4 1025.2,598.7 1029.2,597.1 C1033.2,595.5 1040.2,593.6 1044.2,592 C1048.2,590.3 1049.7,587.9 1053.2,587.2 C1056.7,586.4 1061.2,587.7 1065.2,587.5 C1069.2,587.2 1073.7,587.8 1077.2,585.7 C1080.7,583.5 1082.5,577.5 1086.2,574.6 C1090,571.6 1095.2,568.5 1099.7,568 C1104.2,567.5 1109.2,570.2 1113.2,571.6 C1117.2,572.9 1120.3,575.8 1123.8,576.1 C1127.3,576.3 1130.3,574.4 1134.3,573.1 C1138.3,571.7 1143.8,568.4 1147.8,568 C1151.8,567.6 1154.5,569.9 1158.3,570.7 C1162,571.4 1166.3,572.5 1170.3,572.5 C1174.3,572.5 1178.3,571.5 1182.3,570.7 C1186.3,569.9 1190.3,568.3 1194.3,567.7 C1198.3,567.1 1202.3,567.8 1206.3,567.1 C1210.3,566.4 1214.3,562.8 1218.3,563.5 C1222.4,564.1 1228.4,569.7 1230.4,571 L1230.4,605.5  C1228.4,604.5 1222.4,599.6 1218.3,599.5 C1214.3,599.3 1210.3,603.3 1206.3,604.6 C1202.3,605.8 1198.3,606.6 1194.3,607 C1190.3,607.3 1186.3,606.3 1182.3,606.7 C1178.3,607 1174.1,608.9 1170.3,609.1 C1166.5,609.2 1163.5,608.4 1159.8,607.6 C1156,606.7 1152,603.8 1147.8,604 C1143.5,604.1 1138.3,607.1 1134.3,608.5 C1130.3,609.8 1127.5,612.5 1123.8,612.1 C1120,611.7 1115.5,607.9 1111.7,606.1 C1108,604.2 1105,601 1101.2,601 C1097.5,601 1093.2,603.6 1089.2,606.1 C1085.2,608.5 1081.5,613.6 1077.2,615.7 C1073,617.8 1067.7,618.7 1063.7,618.7 C1059.7,618.7 1057.7,615.5 1053.2,615.7 C1048.7,616 1042.2,618.8 1036.7,620.2 C1031.2,621.6 1025.4,623.1 1020.2,624.1 C1014.9,625.1 1009.4,625.1 1005.1,626.2 C1000.9,627.3 998.6,630.8 994.6,630.7 C990.6,630.6 985.4,627.5 981.1,625.6 C976.9,623.8 972.9,622.4 969.1,619.6 C965.3,616.9 962.3,610 958.6,609.1 C954.8,608.2 950.3,614 946.6,614.2 C942.8,614.5 940.1,611.5 936.1,610.6 C932.1,609.7 927.1,608.9 922.6,609.1 C918,609.2 913,610.4 909,611.5 C905,612.6 901.8,613.9 898.5,615.7 C895.3,617.6 893,620.5 889.5,622.6 C886,624.8 881.4,626.4 877.4,628.6 C873.4,630.9 869.4,634 865.4,636.1 C861.4,638.2 857.1,641 853.4,641.2 C849.6,641.5 846.6,638.4 842.9,637.6 C839.1,636.9 835.1,637.1 830.8,636.7 C826.6,636.3 822.1,636.1 817.3,635.2 C812.6,634.4 806.6,632.4 802.3,631.6 C798.1,630.9 795.1,631.7 791.8,630.7 C788.5,629.7 786,625.7 782.8,625.6 C779.5,625.5 776.5,628.2 772.3,630.1 C768,632 761.8,637.5 757.3,637 C752.8,636.5 749.3,628.9 745.3,627.1 C741.3,625.3 737.2,626.6 733.2,626.2 C729.2,625.8 725,626 721.2,624.7 C717.5,623.5 714.2,619 710.7,618.7 C707.2,618.5 704.5,623.4 700.2,623.2 C696,623 689.7,618.8 685.2,617.5 C680.7,616.3 676.7,615.9 673.2,615.7 C669.7,615.6 667.7,616.5 664.2,616.6 C660.7,616.8 655.9,617.7 652.2,616.6 C648.4,615.5 644.7,611.3 641.7,610 C638.6,608.7 637.4,608.2 634.1,609.1 C630.9,609.9 625.1,613.6 622.1,615.1 C619.1,616.6 619.1,616.6 616.1,618.1 C613.1,619.6 607.9,622.6 604.1,624.1 C600.4,625.6 597.6,627.8 593.6,627.1 C589.6,626.4 584.1,620 580.1,619.9 C576.1,619.8 572.6,625.4 569.6,626.5 C566.6,627.6 565.3,627.2 562.1,626.5 C558.8,625.9 554,624 550.1,622.6 C546.2,621.2 540.6,618.9 538.6,618.1 Z" fill="#f9b1ab"/>
<path d="M538.6,618.1 C540.6,618.9 546.2,621.2 550.1,622.6 C554,624 558.8,625.9 562.1,626.5 C565.3,627.2 566.6,627.6 569.6,626.5 C572.6,625.4 576.1,619.8 580.1,619.9 C584.1,620 589.6,626.4 593.6,627.1 C597.6,627.8 600.4,625.6 604.1,624.1 C607.9,622.6 613.1,619.6 616.1,618.1 C619.1,616.6 619.1,616.6 622.1,615.1 C625.1,613.6 630.9,609.9 634.1,609.1 C637.4,608.2 638.6,608.7 641.7,610 C644.7,611.3 648.4,615.5 652.2,616.6 C655.9,617.7 660.7,616.8 664.2,616.6 C667.7,616.5 669.7,615.6 673.2,615.7 C676.7,615.9 680.7,616.3 685.2,617.5 C689.7,618.8 696,623 700.2,623.2 C704.5,623.4 707.2,618.5 710.7,618.7 C714.2,619 717.5,623.5 721.2,624.7 C725,626 729.2,625.8 733.2,626.2 C737.2,626.6 741.3,625.3 745.3,627.1 C749.3,628.9 752.8,636.5 757.3,637 C761.8,637.5 768,632 772.3,630.1 C776.5,628.2 779.5,625.5 782.8,625.6 C786,625.7 788.5,629.7 791.8,630.7 C795.1,631.7 798.1,630.9 802.3,631.6 C806.6,632.4 812.6,634.4 817.3,635.2 C822.1,636.1 826.6,636.3 830.8,636.7 C835.1,637.1 839.1,636.9 842.9,637.6 C846.6,638.4 849.6,641.5 853.4,641.2 C857.1,641 861.4,638.2 865.4,636.1 C869.4,634 873.4,630.9 877.4,628.6 C881.4,626.4 886,624.8 889.5,622.6 C893,620.5 895.3,617.6 898.5,615.7 C901.8,613.9 905,612.6 909,611.5 C913,610.4 918,609.2 922.6,609.1 C927.1,608.9 932.1,609.7 936.1,610.6 C940.1,611.5 942.8,614.5 946.6,614.2 C950.3,614 954.8,608.2 958.6,609.1 C962.3,610 965.3,616.9 969.1,619.6 C972.9,622.4 976.9,623.8 981.1,625.6 C985.4,627.5 990.6,630.6 994.6,630.7 C998.6,630.8 1000.9,627.3 1005.1,626.2 C1009.4,625.1 1014.9,625.1 1020.2,624.1 C1025.4,623.1 1031.2,621.6 1036.7,620.2 C1042.2,618.8 1048.7,616 1053.2,615.7 C1057.7,615.5 1059.7,618.7 1063.7,618.7 C1067.7,618.7 1073,617.8 1077.2,615.7 C1081.5,613.6 1085.2,608.5 1089.2,606.1 C1093.2,603.6 1097.5,601 1101.2,601 C1105,601 1108,604.2 1111.7,606.1 C1115.5,607.9 1120,611.7 1123.8,612.1 C1127.5,612.5 1130.3,609.8 1134.3,608.5 C1138.3,607.1 1143.5,604.1 1147.8,604 C1152,603.8 1156,606.7 1159.8,607.6 C1163.5,608.4 1166.5,609.2 1170.3,609.1 C1174.1,608.9 1178.3,607 1182.3,606.7 C1186.3,606.3 1190.3,607.3 1194.3,607 C1198.3,606.6 1202.3,605.8 1206.3,604.6 C1210.3,603.3 1214.3,599.3 1218.3,599.5 C1222.4,599.6 1228.4,604.5 1230.4,605.5 L1230.4,678.8  C1228.4,678.4 1222.4,676.7 1218.3,676.7 C1214.3,676.7 1214.3,678.4 1206.3,678.8 C1198.3,679.1 1181.3,678.8 1170.3,678.8 C1159.3,678.8 1148.3,678.8 1140.3,678.8 C1132.3,678.8 1127.3,679.7 1122.3,678.8 C1117.2,677.8 1113.7,674.3 1110.2,673.1 C1106.7,671.8 1104.7,671.4 1101.2,671.3 C1097.7,671.1 1093.2,671.3 1089.2,672.2 C1085.2,673.1 1081.5,675.7 1077.2,676.7 C1073,677.7 1067.7,678.7 1063.7,678.2 C1059.7,677.7 1056.7,673.6 1053.2,673.7 C1049.7,673.8 1046.7,678.1 1042.7,678.8 C1038.7,679.4 1033.4,677.6 1029.2,677.6 C1024.9,677.6 1022.7,678.6 1017.1,678.8 C1011.6,679 1002.1,678.8 996.1,678.8 C990.1,678.8 985.6,679.6 981.1,678.8 C976.6,677.9 972.9,675.6 969.1,673.7 C965.3,671.7 962.3,668.1 958.6,667.1 C954.8,666.1 950.3,668.2 946.6,667.7 C942.8,667.1 939.8,664.8 936.1,663.8 C932.3,662.8 928.1,662.5 924.1,661.7 C920.1,660.9 916,658.9 912,658.9 C908,658.9 904,660.6 900,661.7 C896,662.8 891.8,664.5 888,665.6 C884.2,666.7 881.2,666.7 877.4,668.3 C873.6,669.9 869.1,673.4 865.4,675.2 C861.6,677 858.6,678.4 854.9,679.1 C851.1,679.7 847.1,679.5 842.9,679.1 C838.6,678.7 833.6,677.8 829.3,676.7 C825.1,675.5 820.8,672.9 817.3,672.2 C813.8,671.4 812.3,672.2 808.3,672.2 C804.3,672.2 797.6,673.2 793.3,672.2 C789,671.2 786.3,666.8 782.8,666.2 C779.3,665.5 776.3,667.1 772.3,668.3 C768.3,669.4 763.3,673.6 758.8,673.1 C754.3,672.6 749,667 745.3,665.3 C741.5,663.5 740.3,662.9 736.2,662.6 C732.2,662.2 725.5,663.3 721.2,663.2 C717,663 714.2,661.2 710.7,661.7 C707.2,662.2 704,665.7 700.2,666.2 C696.5,666.7 692.2,665.2 688.2,664.7 C684.2,664.2 680.2,663.1 676.2,663.2 C672.2,663.2 668.2,664.5 664.2,665 C660.2,665.5 656.2,666.7 652.2,666.2 C648.2,665.6 643.4,661.7 640.2,661.7 C636.9,661.7 635.4,664.4 632.6,666.2 C629.9,667.9 626.4,670.9 623.6,672.2 C620.9,673.4 619.4,673.4 616.1,673.7 C612.9,674 608.1,674.1 604.1,674 C600.1,673.8 596.1,673.5 592.1,672.8 C588.1,672.1 583.8,669.3 580.1,669.8 C576.3,670.3 572.6,675.4 569.6,675.8 C566.6,676.2 565.3,673.2 562.1,672.2 C558.8,671.2 554,670.4 550.1,669.8 C546.2,669.2 540.6,668.8 538.6,668.6 Z" fill="#b8dfb9"/>
<path d="M538.6,668.6 C540.6,668.8 546.2,669.2 550.1,669.8 C554,670.4 558.8,671.2 562.1,672.2 C565.3,673.2 566.6,676.2 569.6,675.8 C572.6,675.4 576.3,670.3 580.1,669.8 C583.8,669.3 588.1,672.1 592.1,672.8 C596.1,673.5 600.1,673.8 604.1,674 C608.1,674.1 612.9,674 616.1,673.7 C619.4,673.4 620.9,673.4 623.6,672.2 C626.4,670.9 629.9,667.9 632.6,666.2 C635.4,664.4 636.9,661.7 640.2,661.7 C643.4,661.7 648.2,665.6 652.2,666.2 C656.2,666.7 660.2,665.5 664.2,665 C668.2,664.5 672.2,663.2 676.2,663.2 C680.2,663.1 684.2,664.2 688.2,664.7 C692.2,665.2 696.5,666.7 700.2,666.2 C704,665.7 707.2,662.2 710.7,661.7 C714.2,661.2 717,663 721.2,663.2 C725.5,663.3 732.2,662.2 736.2,662.6 C740.3,662.9 741.5,663.5 745.3,665.3 C749,667 754.3,672.6 758.8,673.1 C763.3,673.6 768.3,669.4 772.3,668.3 C776.3,667.1 779.3,665.5 782.8,666.2 C786.3,666.8 789,671.2 793.3,672.2 C797.6,673.2 804.3,672.2 808.3,672.2 C812.3,672.2 813.8,671.4 817.3,672.2 C820.8,672.9 825.1,675.5 829.3,676.7 C833.6,677.8 838.6,678.7 842.9,679.1 C847.1,679.5 851.1,679.7 854.9,679.1 C858.6,678.4 861.6,677 865.4,675.2 C869.1,673.4 873.6,669.9 877.4,668.3 C881.2,666.7 884.2,666.7 888,665.6 C891.8,664.5 896,662.8 900,661.7 C904,660.6 908,658.9 912,658.9 C916,658.9 920.1,660.9 924.1,661.7 C928.1,662.5 932.3,662.8 936.1,663.8 C939.8,664.8 942.8,667.1 946.6,667.7 C950.3,668.2 954.8,666.1 958.6,667.1 C962.3,668.1 965.3,671.7 969.1,673.7 C972.9,675.6 976.6,677.9 981.1,678.8 C985.6,679.6 990.1,678.8 996.1,678.8 C1002.1,678.8 1011.6,679 1017.1,678.8 C1022.7,678.6 1024.9,677.6 1029.2,677.6 C1033.4,677.6 1038.7,679.4 1042.7,678.8 C1046.7,678.1 1049.7,673.8 1053.2,673.7 C1056.7,673.6 1059.7,677.7 1063.7,678.2 C1067.7,678.7 1073,677.7 1077.2,676.7 C1081.5,675.7 1085.2,673.1 1089.2,672.2 C1093.2,671.3 1097.7,671.1 1101.2,671.3 C1104.7,671.4 1106.7,671.8 1110.2,673.1 C1113.7,674.3 1117.2,677.8 1122.3,678.8 C1127.3,679.7 1132.3,678.8 1140.3,678.8 C1148.3,678.8 1159.3,678.8 1170.3,678.8 C1181.3,678.8 1198.3,679.1 1206.3,678.8 C1214.3,678.4 1214.3,676.7 1218.3,676.7 C1222.4,676.7 1228.4,678.4 1230.4,678.8 L1230.4,744.2 L538.6,744.2 Z" fill="#a6d4f9"/>
<rect x="538.6" y="526" width="708.9" height="1" fill="rgba(0,0,0,0.11)"/>
<rect x="538.6" y="580.4" width="708.9" height="1" fill="rgba(0,0,0,0.11)"/>
<rect x="538.6" y="634.9" width="708.9" height="1" fill="rgba(0,0,0,0.11)"/>
<rect x="538.6" y="689.3" width="708.9" height="1" fill="rgba(0,0,0,0.11)"/>
<rect x="538.6" y="743.7" width="708.9" height="1" fill="rgba(0,0,0,0.11)"/>
<rect x="563.1" y="526.5" width="1" height="217.7" fill="rgba(0,0,0,0.12)"/>
<text x="563.6" y="757.5" font-size="10.5" font-weight="normal" fill="#545454" text-anchor="middle" textLength="38" lengthAdjust="spacingAndGlyphs">10:49:55</text>
<rect x="622.1" y="526.5" width="1" height="217.7" fill="rgba(0,0,0,0.12)"/>
<text x="622.6" y="757.5" font-size="10.5" font-weight="normal" fill="#545454" text-anchor="middle" textLength="38" lengthAdjust="spacingAndGlyphs">10:50:00</text>
<rect x="681.1" y="526.5" width="1" height="217.7" fill="rgba(0,0,0,0.12)"/>
<text x="681.6" y="757.5" font-size="10.5" font-weight="normal" fill="#545454" text-anchor="middle" textLength="38" lengthAdjust="spacingAndGlyphs">10:50:05</text>
<rect x="740.1" y="526.5" width="1" height="217.7" fill="rgba(0,0,0,0.12)"/>
<text x="740.6" y="757.5" font-size="10.5" font-weight="normal" fill="#545454" text-anchor="middle" textLength="38" lengthAdjust="spacingAndGlyphs">10:50:10</text>
<rect x="799.1" y="526.5" width="1" height="217.7" fill="rgba(0,0,0,0.12)"/>
<text x="799.6" y="757.5" font-size="10.5" font-weight="normal" fill="#545454" text-anchor="middle" textLength="38" lengthAdjust="spacingAndGlyphs">10:50:15</text>
<rect x="858.1" y="526.5" width="1" height="217.7" fill="rgba(0,0,0,0.12)"/>
<text x="858.6" y="757.5" font-size="10.5" font-weight="normal" fill="#545454" text-anchor="middle" textLength="38" lengthAdjust="spacingAndGlyphs">10:50:20</text>
<rect x="917.1" y="526.5" width="1" height="217.7" fill="rgba(0,0,0,0.12)"/>
<text x="917.6" y="757.5" font-size="10.5" font-weight="normal" fill="#545454" text-anchor="middle" textLength="38" lengthAdjust="spacingAndGlyphs">10:50:25</text>
<rect x="976.1" y="526.5" width="1" height="217.7" fill="rgba(0,0,0,0.12)"/>
<text x="976.6" y="757.5" font-size="10.5" font-weight="normal" fill="#545454" text-anchor="middle" textLength="38" lengthAdjust="spacingAndGlyphs">10:50:30</text>
<rect x="1035.1" y="526.5" width="1" height="217.7" fill="rgba(0,0,0,0.12)"/>
<text x="1035.6" y="757.5" font-size="10.5" font-weight="normal" fill="#545454" text-anchor="middle" textLength="38" lengthAdjust="spacingAndGlyphs">10:50:35</text>
<rect x="1094.1" y="526.5" width="1" height="217.7" fill="rgba(0,0,0,0.12)"/>
<text x="1094.6" y="757.5" font-size="10.5" font-weight="normal" fill="#545454" text-anchor="middle" textLength="38" lengthAdjust="spacingAndGlyphs">10:50:40</text>
<rect x="1153.1" y="526.5" width="1" height="217.7" fill="rgba(0,0,0,0.12)"/>
<text x="1153.6" y="757.5" font-size="10.5" font-weight="normal" fill="#545454" text-anchor="middle" textLength="38" lengthAdjust="spacingAndGlyphs">10:50:45</text>
<rect x="1212.1" y="526.5" width="1" height="217.7" fill="rgba(0,0,0,0.12)"/>
<text x="1212.6" y="757.5" font-size="10.5" font-weight="normal" fill="#545454" text-anchor="middle" textLength="38" lengthAdjust="spacingAndGlyphs">10:50:50</text>
<rect x="538.1" y="526.5" width="1" height="217.7" fill="#cfcfcf"/>
<rect x="1247" y="526.5" width="1" height="217.7" fill="#cfcfcf"/>
<path d="M538.6,572.5 C539.8,572.7 542.9,573 545.6,574 C548.2,575 551.8,577.2 554.6,578.5 C557.3,579.7 559.3,580.6 562.1,581.5 C564.8,582.3 568.1,583.8 571.1,583.6 C574.1,583.4 577.6,580.4 580.1,580.3 C582.6,580.2 583.8,581.4 586.1,583 C588.3,584.5 591.1,588.5 593.6,589.6 C596.1,590.7 598.4,590.2 601.1,589.6 C603.9,588.9 607.1,586.9 610.1,585.7 C613.1,584.4 616.1,583.1 619.1,582.1 C622.1,581.1 625.1,580.7 628.1,579.7 C631.1,578.7 634.6,576.4 637.1,576.1 C639.6,575.7 640.7,576 643.2,577.6 C645.7,579.2 648.7,584.1 652.2,585.7 C655.7,587.2 660.7,586.4 664.2,586.9 C667.7,587.4 669.7,588.1 673.2,588.7 C676.7,589.3 680.7,589.5 685.2,590.5 C689.7,591.5 696,594.8 700.2,594.7 C704.5,594.5 707.2,588.9 710.7,589.6 C714.2,590.2 718,596.7 721.2,598.6 C724.5,600.4 726.7,600.4 730.2,600.7 C733.7,600.9 739.2,599.9 742.3,600.1 C745.3,600.2 745.8,600.3 748.3,601.6 C750.8,602.8 753.3,607.6 757.3,607.6 C761.3,607.6 768,603.8 772.3,601.6 C776.5,599.3 779.5,594.3 782.8,594.1 C786,593.8 788.5,598.8 791.8,600.1 C795.1,601.3 798.6,600.7 802.3,601.6 C806.1,602.5 809.8,604.6 814.3,605.5 C818.8,606.3 824.6,606.5 829.3,606.7 C834.1,606.9 838.8,605.5 842.9,606.7 C846.9,607.8 850.1,613.1 853.4,613.6 C856.6,614.1 858.9,612 862.4,609.7 C865.9,607.4 870.1,602.4 874.4,600.1 C878.7,597.7 884,597.7 888,595.6 C892,593.5 895,589.6 898.5,587.5 C902,585.4 905.8,583.9 909,583 C912.3,582.1 915,582.2 918,582.1 C921.1,581.9 924.3,582.3 927.1,582.1 C929.8,581.8 931.3,580.2 934.6,580.6 C937.8,581 942.6,584.2 946.6,584.5 C950.6,584.7 954.8,580.2 958.6,582.1 C962.3,583.9 965.6,592.2 969.1,595.6 C972.6,599 975.4,600.6 979.6,602.5 C983.9,604.3 990.4,606.4 994.6,606.7 C998.9,606.9 1000.9,604.8 1005.1,604 C1009.4,603.1 1016.1,602.7 1020.2,601.6 C1024.2,600.4 1025.2,598.7 1029.2,597.1 C1033.2,595.5 1040.2,593.6 1044.2,592 C1048.2,590.3 1049.7,587.9 1053.2,587.2 C1056.7,586.4 1061.2,587.7 1065.2,587.5 C1069.2,587.2 1073.7,587.8 1077.2,585.7 C1080.7,583.5 1082.5,577.5 1086.2,574.6 C1090,571.6 1095.2,568.5 1099.7,568 C1104.2,567.5 1109.2,570.2 1113.2,571.6 C1117.2,572.9 1120.3,575.8 1123.8,576.1 C1127.3,576.3 1130.3,574.4 1134.3,573.1 C1138.3,571.7 1143.8,568.4 1147.8,568 C1151.8,567.6 1154.5,569.9 1158.3,570.7 C1162,571.4 1166.3,572.5 1170.3,572.5 C1174.3,572.5 1178.3,571.5 1182.3,570.7 C1186.3,569.9 1190.3,568.3 1194.3,567.7 C1198.3,567.1 1202.3,567.8 1206.3,567.1 C1210.3,566.4 1214.3,562.8 1218.3,563.5 C1222.4,564.1 1228.4,569.7 1230.4,571" fill="none" stroke="#f0392b" stroke-width="2"/>
<path d="M538.6,618.1 C540.6,618.9 546.2,621.2 550.1,622.6 C554,624 558.8,625.9 562.1,626.5 C565.3,627.2 566.6,627.6 569.6,626.5 C572.6,625.4 576.1,619.8 580.1,619.9 C584.1,620 589.6,626.4 593.6,627.1 C597.6,627.8 600.4,625.6 604.1,624.1 C607.9,622.6 613.1,619.6 616.1,618.1 C619.1,616.6 619.1,616.6 622.1,615.1 C625.1,613.6 630.9,609.9 634.1,609.1 C637.4,608.2 638.6,608.7 641.7,610 C644.7,611.3 648.4,615.5 652.2,616.6 C655.9,617.7 660.7,616.8 664.2,616.6 C667.7,616.5 669.7,615.6 673.2,615.7 C676.7,615.9 680.7,616.3 685.2,617.5 C689.7,618.8 696,623 700.2,623.2 C704.5,623.4 707.2,618.5 710.7,618.7 C714.2,619 717.5,623.5 721.2,624.7 C725,626 729.2,625.8 733.2,626.2 C737.2,626.6 741.3,625.3 745.3,627.1 C749.3,628.9 752.8,636.5 757.3,637 C761.8,637.5 768,632 772.3,630.1 C776.5,628.2 779.5,625.5 782.8,625.6 C786,625.7 788.5,629.7 791.8,630.7 C795.1,631.7 798.1,630.9 802.3,631.6 C806.6,632.4 812.6,634.4 817.3,635.2 C822.1,636.1 826.6,636.3 830.8,636.7 C835.1,637.1 839.1,636.9 842.9,637.6 C846.6,638.4 849.6,641.5 853.4,641.2 C857.1,641 861.4,638.2 865.4,636.1 C869.4,634 873.4,630.9 877.4,628.6 C881.4,626.4 886,624.8 889.5,622.6 C893,620.5 895.3,617.6 898.5,615.7 C901.8,613.9 905,612.6 909,611.5 C913,610.4 918,609.2 922.6,609.1 C927.1,608.9 932.1,609.7 936.1,610.6 C940.1,611.5 942.8,614.5 946.6,614.2 C950.3,614 954.8,608.2 958.6,609.1 C962.3,610 965.3,616.9 969.1,619.6 C972.9,622.4 976.9,623.8 981.1,625.6 C985.4,627.5 990.6,630.6 994.6,630.7 C998.6,630.8 1000.9,627.3 1005.1,626.2 C1009.4,625.1 1014.9,625.1 1020.2,624.1 C1025.4,623.1 1031.2,621.6 1036.7,620.2 C1042.2,618.8 1048.7,616 1053.2,615.7 C1057.7,615.5 1059.7,618.7 1063.7,618.7 C1067.7,618.7 1073,617.8 1077.2,615.7 C1081.5,613.6 1085.2,608.5 1089.2,606.1 C1093.2,603.6 1097.5,601 1101.2,601 C1105,601 1108,604.2 1111.7,606.1 C1115.5,607.9 1120,611.7 1123.8,612.1 C1127.5,612.5 1130.3,609.8 1134.3,608.5 C1138.3,607.1 1143.5,604.1 1147.8,604 C1152,603.8 1156,606.7 1159.8,607.6 C1163.5,608.4 1166.5,609.2 1170.3,609.1 C1174.1,608.9 1178.3,607 1182.3,606.7 C1186.3,606.3 1190.3,607.3 1194.3,607 C1198.3,606.6 1202.3,605.8 1206.3,604.6 C1210.3,603.3 1214.3,599.3 1218.3,599.5 C1222.4,599.6 1228.4,604.5 1230.4,605.5" fill="none" stroke="#43a047" stroke-width="2"/>
<path d="M538.6,668.6 C540.6,668.8 546.2,669.2 550.1,669.8 C554,670.4 558.8,671.2 562.1,672.2 C565.3,673.2 566.6,676.2 569.6,675.8 C572.6,675.4 576.3,670.3 580.1,669.8 C583.8,669.3 588.1,672.1 592.1,672.8 C596.1,673.5 600.1,673.8 604.1,674 C608.1,674.1 612.9,674 616.1,673.7 C619.4,673.4 620.9,673.4 623.6,672.2 C626.4,670.9 629.9,667.9 632.6,666.2 C635.4,664.4 636.9,661.7 640.2,661.7 C643.4,661.7 648.2,665.6 652.2,666.2 C656.2,666.7 660.2,665.5 664.2,665 C668.2,664.5 672.2,663.2 676.2,663.2 C680.2,663.1 684.2,664.2 688.2,664.7 C692.2,665.2 696.5,666.7 700.2,666.2 C704,665.7 707.2,662.2 710.7,661.7 C714.2,661.2 717,663 721.2,663.2 C725.5,663.3 732.2,662.2 736.2,662.6 C740.3,662.9 741.5,663.5 745.3,665.3 C749,667 754.3,672.6 758.8,673.1 C763.3,673.6 768.3,669.4 772.3,668.3 C776.3,667.1 779.3,665.5 782.8,666.2 C786.3,666.8 789,671.2 793.3,672.2 C797.6,673.2 804.3,672.2 808.3,672.2 C812.3,672.2 813.8,671.4 817.3,672.2 C820.8,672.9 825.1,675.5 829.3,676.7 C833.6,677.8 838.6,678.7 842.9,679.1 C847.1,679.5 851.1,679.7 854.9,679.1 C858.6,678.4 861.6,677 865.4,675.2 C869.1,673.4 873.6,669.9 877.4,668.3 C881.2,666.7 884.2,666.7 888,665.6 C891.8,664.5 896,662.8 900,661.7 C904,660.6 908,658.9 912,658.9 C916,658.9 920.1,660.9 924.1,661.7 C928.1,662.5 932.3,662.8 936.1,663.8 C939.8,664.8 942.8,667.1 946.6,667.7 C950.3,668.2 954.8,666.1 958.6,667.1 C962.3,668.1 965.3,671.7 969.1,673.7 C972.9,675.6 976.6,677.9 981.1,678.8 C985.6,679.6 990.1,678.8 996.1,678.8 C1002.1,678.8 1011.6,679 1017.1,678.8 C1022.7,678.6 1024.9,677.6 1029.2,677.6 C1033.4,677.6 1038.7,679.4 1042.7,678.8 C1046.7,678.1 1049.7,673.8 1053.2,673.7 C1056.7,673.6 1059.7,677.7 1063.7,678.2 C1067.7,678.7 1073,677.7 1077.2,676.7 C1081.5,675.7 1085.2,673.1 1089.2,672.2 C1093.2,671.3 1097.7,671.1 1101.2,671.3 C1104.7,671.4 1106.7,671.8 1110.2,673.1 C1113.7,674.3 1117.2,677.8 1122.3,678.8 C1127.3,679.7 1132.3,678.8 1140.3,678.8 C1148.3,678.8 1159.3,678.8 1170.3,678.8 C1181.3,678.8 1198.3,679.1 1206.3,678.8 C1214.3,678.4 1214.3,676.7 1218.3,676.7 C1222.4,676.7 1228.4,678.4 1230.4,678.8" fill="none" stroke="#1e88e5" stroke-width="2"/>
<text transform="translate(506.8,634) rotate(-90)" x="0" y="0" font-size="11.5" font-weight="bold" fill="#444" text-anchor="middle" textLength="70" lengthAdjust="spacingAndGlyphs">Amperage, A</text>
<text x="1254" y="782.8" font-size="12" font-weight="bold" fill="#ff6e40" text-anchor="end">avg</text>
<rect x="499" y="797.1" width="15" height="3" fill="#2196f3"/>
<text x="526.8" y="802.1" font-size="12" font-weight="normal" fill="#212121" text-anchor="start" textLength="77" lengthAdjust="spacingAndGlyphs">Smart Meter C</text>
<text x="1254" y="802.1" font-size="12" font-weight="normal" fill="#212121" text-anchor="end">6.65 A</text>
<rect x="499" y="817.1" width="15" height="3" fill="#4caf50"/>
<text x="526.8" y="822.1" font-size="12" font-weight="normal" fill="#212121" text-anchor="start" textLength="77" lengthAdjust="spacingAndGlyphs">Smart Meter B</text>
<text x="1254" y="822.1" font-size="12" font-weight="normal" fill="#212121" text-anchor="end">4.84 A</text>
<rect x="499" y="837.1" width="15" height="3" fill="#f44336"/>
<text x="526.8" y="842.1" font-size="12" font-weight="normal" fill="#212121" text-anchor="start" textLength="77" lengthAdjust="spacingAndGlyphs">Smart Meter A</text>
<text x="1254" y="842.1" font-size="12" font-weight="normal" fill="#212121" text-anchor="end">2.91 A</text>
<text x="1302" y="470" font-size="24" font-weight="bold" fill="#212121" text-anchor="start" textLength="77" lengthAdjust="spacingAndGlyphs">Alarms</text>
<circle cx="1791.3" cy="459.4" r="4.6" fill="none" stroke="#212121" stroke-width="1.6"/>
<path d="M1794.6,462.7 L1799.9,468" stroke="#212121" stroke-width="1.8"/>
<rect x="1818.3" y="456.8" width="15" height="1.7" fill="#212121"/>
<rect x="1821.2" y="460.8" width="9.2" height="1.7" fill="#212121"/>
<rect x="1824.1" y="464.8" width="3.4" height="1.7" fill="#212121"/>
<rect x="1850.1" y="455.7" width="4.1" height="11.9" fill="#212121"/>
<rect x="1855.7" y="455.7" width="3.9" height="11.9" fill="#212121"/>
<rect x="1861.1" y="455.7" width="4" height="11.9" fill="#212121"/>
<path d="M1884.6,459.7 V456.6 H1887.8 M1891.8,456.6 H1895 V459.7 M1895,463.7 V466.8 H1891.8 M1887.8,466.8 H1884.6 V463.7" fill="none" stroke="#212121" stroke-width="1.7" stroke-linecap="butt" stroke-linejoin="miter"/>
<circle cx="1313.8" cy="509" r="9.0" fill="none" stroke="#333" stroke-width="1.9"/>
<path d="M1313,504 V509.5 L1317.1,512.2" fill="none" stroke="#333" stroke-width="1.5"/>
<text x="1330.6" y="514.2" font-size="14" font-weight="normal" fill="#444" text-anchor="start" textLength="113" lengthAdjust="spacingAndGlyphs">Realtime - last day</text>
<rect x="1300" y="548" width="14" height="14" rx="1.5" fill="none" stroke="#6e6e6e" stroke-width="2"/>
<text x="1334.5" y="559.2" font-size="12" font-weight="normal" fill="#757575" text-anchor="start" textLength="53" lengthAdjust="spacingAndGlyphs" stroke="#757575" stroke-width="0.45">Start time</text>
<text x="1415" y="559.2" font-size="12" font-weight="normal" fill="#757575" text-anchor="start" textLength="53.5" lengthAdjust="spacingAndGlyphs" stroke="#757575" stroke-width="0.45">Originator</text>
<text x="1497" y="559.2" font-size="12" font-weight="normal" fill="#757575" text-anchor="start" textLength="25" lengthAdjust="spacingAndGlyphs" stroke="#757575" stroke-width="0.45">Type</text>
<text x="1627" y="559.2" font-size="12" font-weight="normal" fill="#757575" text-anchor="start" textLength="43" lengthAdjust="spacingAndGlyphs" stroke="#757575" stroke-width="0.45">Severity</text>
<text x="1697.6" y="559.2" font-size="12" font-weight="normal" fill="#757575" text-anchor="start" textLength="34" lengthAdjust="spacingAndGlyphs" stroke="#757575" stroke-width="0.45">Status</text>
<path d="M1398.8,550.8 V559.5 M1394.9,555.9 L1398.8,559.7 L1402.7,555.9" fill="none" stroke="#8a8a8a" stroke-width="1.3"/>
<rect x="1287" y="584.1" width="619" height="1" fill="#e0e0e0"/>
<rect x="1287" y="636.1" width="619" height="1" fill="#e0e0e0"/>
<rect x="1287" y="688" width="619" height="1" fill="#e0e0e0"/>
<rect x="1300" y="604.3" width="14" height="14" rx="1.5" fill="none" stroke="#6e6e6e" stroke-width="2"/>
<text x="1334.5" y="607.7" font-size="13" font-weight="normal" fill="#212121" text-anchor="start" textLength="64.6" lengthAdjust="spacingAndGlyphs">2022-02-10</text>
<text x="1334.5" y="622.7" font-size="13" font-weight="normal" fill="#212121" text-anchor="start">10:50:49</text>
<text x="1415.2" y="607.7" font-size="13" font-weight="normal" fill="#212121" text-anchor="start">Smart</text>
<text x="1415.2" y="622.7" font-size="13" font-weight="normal" fill="#212121" text-anchor="start">Meter C</text>
<text x="1497" y="614.7" font-size="13" font-weight="normal" fill="#212121" text-anchor="start">Low Voltage Alarm</text>
<text x="1627" y="614.7" font-size="13" font-weight="bold" fill="#ffa500" text-anchor="start" textLength="33" lengthAdjust="spacingAndGlyphs">Major</text>
<text x="1697.6" y="607.7" font-size="13" font-weight="normal" fill="#212121" text-anchor="start">Active</text>
<text x="1697.6" y="622.7" font-size="13" font-weight="normal" fill="#212121" text-anchor="start" textLength="99.5" lengthAdjust="spacingAndGlyphs">Unacknowledged</text>
<circle cx="1816.8" cy="611.8" r="1.7" fill="#616161"/>
<circle cx="1822" cy="611.8" r="1.7" fill="#616161"/>
<circle cx="1827.2" cy="611.8" r="1.7" fill="#616161"/>
<path d="M1854.6,611.5 L1859.3,616.2 L1869,606.3" fill="none" stroke="#757575" stroke-width="2"/>
<path d="M1895,606.5 L1906,617.5 M1906,606.5 L1895,617.5" fill="none" stroke="#757575" stroke-width="2"/>
<rect x="1300" y="656.3" width="14" height="14" rx="1.5" fill="none" stroke="#6e6e6e" stroke-width="2"/>
<text x="1334.5" y="659.7" font-size="13" font-weight="normal" fill="#212121" text-anchor="start" textLength="64.6" lengthAdjust="spacingAndGlyphs">2022-02-10</text>
<text x="1334.5" y="674.7" font-size="13" font-weight="normal" fill="#212121" text-anchor="start">10:50:40</text>
<text x="1415.2" y="659.7" font-size="13" font-weight="normal" fill="#212121" text-anchor="start">Smart</text>
<text x="1415.2" y="674.7" font-size="13" font-weight="normal" fill="#212121" text-anchor="start">Meter A</text>
<text x="1497" y="666.7" font-size="13" font-weight="normal" fill="#212121" text-anchor="start">High Voltage Alarm</text>
<text x="1627" y="666.7" font-size="13" font-weight="bold" fill="#ff0000" text-anchor="start" textLength="41" lengthAdjust="spacingAndGlyphs">Critical</text>
<text x="1697.6" y="659.7" font-size="13" font-weight="normal" fill="#212121" text-anchor="start">Active</text>
<text x="1697.6" y="674.7" font-size="13" font-weight="normal" fill="#212121" text-anchor="start" textLength="99.5" lengthAdjust="spacingAndGlyphs">Unacknowledged</text>
<circle cx="1816.8" cy="663.8" r="1.7" fill="#616161"/>
<circle cx="1822" cy="663.8" r="1.7" fill="#616161"/>
<circle cx="1827.2" cy="663.8" r="1.7" fill="#616161"/>
<path d="M1854.6,663.5 L1859.3,668.2 L1869,658.3" fill="none" stroke="#757575" stroke-width="2"/>
<path d="M1895,658.5 L1906,669.5 M1906,658.5 L1895,669.5" fill="none" stroke="#757575" stroke-width="2"/>
<rect x="1287" y="781.3" width="619" height="15" fill="#f1f1f1"/>
<rect x="1302" y="783" width="563.8" height="10.8" fill="#c1c1c1"/>
<path d="M1296.6,785 v7.2 l-4.4,-3.6z" fill="#a3a3a3"/>
<path d="M1896.7,785 v6.7 l4.1,-3.35z" fill="#505050"/>
<rect x="1287" y="795.8" width="619" height="1" fill="#e3e3e3"/>
<text x="1472" y="829.2" font-size="12" font-weight="normal" fill="#757575" text-anchor="start" textLength="82" lengthAdjust="spacingAndGlyphs">Items per page:</text>
<text x="1563.3" y="829.2" font-size="12" font-weight="normal" fill="#555" text-anchor="start" textLength="12.5" lengthAdjust="spacingAndGlyphs">10</text>
<path d="M1605,823.5 h9.6 l-4.8,4.8z" fill="#757575"/>
<rect x="1563" y="837.5" width="56" height="1" fill="#8a8a8a"/>
<text x="1655" y="829.2" font-size="12" font-weight="normal" fill="#757575" text-anchor="start" textLength="51" lengthAdjust="spacingAndGlyphs">1 – 2 of 2</text>
<rect x="1750.8" y="819.7" width="2.2" height="14" fill="#bdbdbd"/>
<path d="M1765.3,820.4 L1756.7,826.7 L1765.3,833" fill="none" stroke="#bdbdbd" stroke-width="1.75"/>
<path d="M1801.8,820.4 L1793.2,826.7 L1801.8,833" fill="none" stroke="#bdbdbd" stroke-width="1.75"/>
<path d="M1833.7,820.4 L1842.3,826.7 L1833.7,833" fill="none" stroke="#bdbdbd" stroke-width="1.75"/>
<path d="M1871.2,820.4 L1879.8,826.7 L1871.2,833" fill="none" stroke="#bdbdbd" stroke-width="1.75"/>
<rect x="1882.6" y="819.7" width="2.2" height="14" fill="#bdbdbd"/>
<text x="1722.8" y="857.3" font-size="12.5" font-weight="normal" fill="#212121" text-anchor="start" textLength="62" lengthAdjust="spacingAndGlyphs">Powered by</text>
<text x="1788.3" y="857.3" font-size="12.5" font-weight="bold" fill="#1976d2" text-anchor="start" textLength="106.4" lengthAdjust="spacingAndGlyphs">Thingsboard v.3.3.4</text>
</svg>
</body></html>
